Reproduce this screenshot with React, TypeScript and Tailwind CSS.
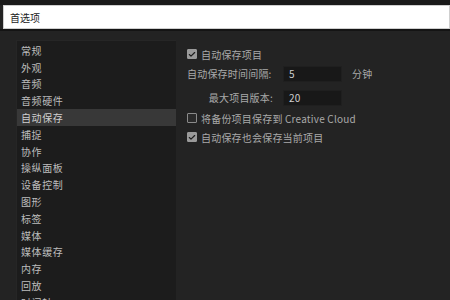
import { Check } from "lucide-react";

const items = [
  "常规", "外观", "音频", "音频硬件", "自动保存", "捕捉", "协作", "操纵面板",
  "设备控制", "图形", "标签", "媒体", "媒体缓存", "内存", "回放", "时间轴",
];

const font = { fontFamily: '"Noto Sans CJK SC", "Noto Sans", sans-serif' };

function Box({ checked }: { checked: boolean }) {
  return (
    <span className="w-[10px] h-[10px] shrink-0 flex items-center justify-center border border-[#8a8a8a] bg-[#2a2a2a] rounded-[1px]"
      style={checked ? { background: "#9a9a9a", borderColor: "#9a9a9a" } : undefined}>
      {checked && <Check size={9} strokeWidth={3.5} className="text-[#1e1e1e]" />}
    </span>
  );
}

export default function App() {
  return (
    <div className="w-[450px] h-[300px] overflow-hidden bg-[#232323] flex flex-col" style={font}>
      <div className="h-[5px] shrink-0 bg-[#1a1a1a]" />
      <div className="h-[24px] shrink-0 ml-[3px] bg-white border border-[#cfcfcf] flex items-center pl-[6px] text-[10px] text-[#222]">
        首选项
      </div>
      <div className="h-[2px] shrink-0 bg-[#141414]" />

      <div className="flex flex-1 min-h-0 overflow-hidden pt-[9px] pl-[16px]">
        <div className="w-[160px] shrink-0 bg-[#1c1c1c] border-t border-l border-[#262626] pt-[1px] text-[10px] text-[#bdbdbd] tracking-[0.6px]">
          {items.map((t) => (
            <div key={t}
              className={`h-[16.8px] flex items-center pl-[4px] ${t === "自动保存" ? "bg-[#383838] text-[#d0d0d0]" : ""}`}>
              {t}
            </div>
          ))}
        </div>

        <div className="flex-1 pl-[11px] pt-[6px] text-[10px] text-[#a9a9a9] tracking-[0.2px]">
          <div className="flex items-center gap-[4px] h-[16px]">
            <Box checked />
            <span>自动保存项目</span>
          </div>
          <div className="flex items-center h-[19px] mt-[2px]">
            <span className="w-[96px]">自动保存时间间隔:</span>
            <div className="w-[59px] h-[16px] bg-[#181818] border border-[#1f1f1f] flex items-center pl-[5px] text-[#cfcfcf]">5</div>
            <span className="ml-[10px]">分钟</span>
          </div>
          <div className="flex items-center h-[19px] mt-[5px]">
            <span className="w-[96px] text-right pr-[10px]">最大项目版本:</span>
            <div className="w-[59px] h-[16px] bg-[#181818] border border-[#1f1f1f] flex items-center pl-[5px] text-[#cfcfcf]">20</div>
          </div>
          <div className="flex items-center gap-[4px] h-[16px] mt-[3px]">
            <Box checked={false} />
            <span>将备份项目保存到 Creative Cloud</span>
          </div>
          <div className="flex items-center gap-[4px] h-[16px] mt-[3px]">
            <Box checked />
            <span>自动保存也会保存当前项目</span>
          </div>
        </div>
      </div>
    </div>
  );
}
